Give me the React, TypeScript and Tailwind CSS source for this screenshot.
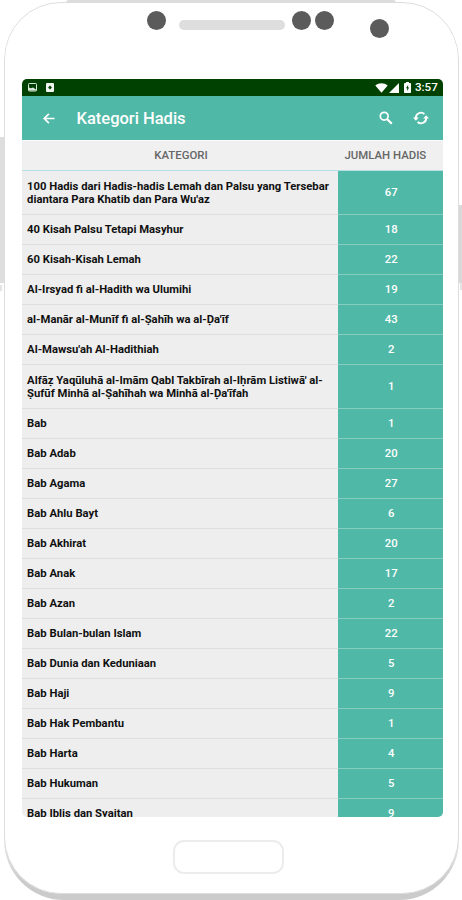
import { ReactNode } from "react";
import clsx from "clsx";

interface Category {
  lines: string[];
  total: number;
}

const categories: Category[] = [
  {
    lines: [
      "100 Hadis dari Hadis-hadis Lemah dan Palsu yang Tersebar",
      "diantara Para Khatib dan Para Wu'az",
    ],
    total: 67,
  },
  { lines: ["40 Kisah Palsu Tetapi Masyhur"], total: 18 },
  { lines: ["60 Kisah-Kisah Lemah"], total: 22 },
  { lines: ["Al-Irsyad fi al-Hadith wa Ulumihi"], total: 19 },
  { lines: ["al-Manār al-Munīf fi al-Ṣahīh wa al-Ḍa'īf"], total: 43 },
  { lines: ["Al-Mawsu'ah Al-Hadithiah"], total: 2 },
  {
    lines: [
      "Alfāẓ Yaqūluhā al-Imām Qabl Takbīrah al-Iḥrām Listiwā' al-",
      "Ṣufūf Minhā al-Ṣahīhah wa Minhā al-Ḍa'īfah",
    ],
    total: 1,
  },
  { lines: ["Bab"], total: 1 },
  { lines: ["Bab Adab"], total: 20 },
  { lines: ["Bab Agama"], total: 27 },
  { lines: ["Bab Ahlu Bayt"], total: 6 },
  { lines: ["Bab Akhirat"], total: 20 },
  { lines: ["Bab Anak"], total: 17 },
  { lines: ["Bab Azan"], total: 2 },
  { lines: ["Bab Bulan-bulan Islam"], total: 22 },
  { lines: ["Bab Dunia dan Keduniaan"], total: 5 },
  { lines: ["Bab Haji"], total: 9 },
  { lines: ["Bab Hak Pembantu"], total: 1 },
  { lines: ["Bab Harta"], total: 4 },
  { lines: ["Bab Hukuman"], total: 5 },
  { lines: ["Bab Iblis dan Syaitan"], total: 9 },
];

function StatusBar() {
  return (
    <div className="flex h-[17px] shrink-0 items-center bg-[#004000] pl-[6px] pr-[5px] text-white">
      <svg className="h-[9px] w-[9px]" viewBox="0 0 9 9" fill="none">
        <rect x="0.5" y="0.5" width="8" height="7.5" rx="0.8" stroke="#d9e6d9" />
        <path d="M1 7.5V4.5L3 5.2L5 4.5L8 6.5V7.5Z" fill="#d9e6d9" />
      </svg>
      <svg className="ml-[9px] h-[9px] w-[8px]" viewBox="0 0 8 9">
        <rect width="8" height="9" rx="1" fill="#f0f5f0" />
        <path d="M4 2.6L5.9 4.5L4 6.4L2.1 4.5Z" fill="#004000" />
      </svg>
      <svg className="ml-auto h-[10px] w-[13px]" viewBox="0 0 13 10">
        <path d="M0.3 2.4C4 -0.6 9 -0.6 12.7 2.4L6.5 9.8Z" fill="currentColor" />
      </svg>
      <svg className="ml-[1px] h-[10px] w-[10px]" viewBox="0 0 10 10">
        <path d="M10 0V10H0Z" fill="currentColor" />
      </svg>
      <svg className="ml-[5px] h-[11px] w-[7px]" viewBox="0 0 7 11">
        <path
          d="M2 0H5V1H6.2Q7 1 7 1.8V10.2Q7 11 6.2 11H0.8Q0 11 0 10.2V1.8Q0 1 0.8 1H2Z"
          fill="currentColor"
        />
        <path d="M4.1 2.9L2 6.3H3.2V9L5.1 5.5H4.1Z" fill="#004000" />
      </svg>
      <span className="ml-[4px] w-[23px] whitespace-nowrap text-[11.6px] leading-[17px] font-medium">
        3:57
      </span>
    </div>
  );
}

function AppBar() {
  return (
    <div className="flex h-[44px] shrink-0 items-center bg-[#50b8a6] pl-[21px] pr-[14px] text-white">
      <svg className="h-[11px] w-[12px]" viewBox="0 0 12 11" fill="none">
        <path
          d="M11.5 5.5H1.2M5.9 0.8L1.2 5.5L5.9 10.2"
          stroke="currentColor"
          strokeWidth="1.7"
        />
      </svg>
      <h1 className="ml-[22px] whitespace-nowrap pt-[1px] text-[16.5px] leading-[44px] font-medium">
        Kategori Hadis
      </h1>
      <svg className="ml-auto h-[14px] w-[14px]" viewBox="0 0 14 14" fill="none">
        <circle cx="5.2" cy="5.2" r="3.9" stroke="currentColor" strokeWidth="1.7" />
        <path d="M8 8L12.8 12.8" stroke="currentColor" strokeWidth="2.2" />
      </svg>
      <svg className="ml-[20px] h-[14px] w-[16px]" viewBox="0 0 16 14" fill="none">
        <path
          d="M2.8 7.2A5.2 5.2 0 0 1 11.4 3M13.2 6.8A5.2 5.2 0 0 1 4.6 11"
          stroke="currentColor"
          strokeWidth="1.9"
        />
        <path d="M0 6.4H5.8L2.9 9.8ZM16 7.6H10.2L13.1 4.2Z" fill="currentColor" />
      </svg>
    </div>
  );
}

function CategoryRow({ lines, total }: Category) {
  return (
    <div className={clsx("flex shrink-0", lines.length > 1 ? "h-[43.75px]" : "h-[30px]")}>
      <div className="flex w-[316px] flex-col justify-center border-b border-[#dedede] bg-[#eeeeee] pt-[1px] pl-[5.6px]">
        {lines.map((line) => (
          <span
            key={line}
            className="whitespace-nowrap text-[11.28px] leading-[13px] font-bold text-[#111111]"
          >
            {line}
          </span>
        ))}
      </div>
      <div className="flex flex-1 items-center justify-center border-b border-[#86cdc0] bg-[#50b8a6] pt-[2px] pl-[2px] text-[11.3px] font-medium text-white">
        {total}
      </div>
    </div>
  );
}

function Screen({ children }: { children: ReactNode }) {
  return (
    <div className="ml-[17px] mt-[76px] flex h-[738px] w-[421.4px] flex-col overflow-hidden rounded-[5px]">
      {children}
    </div>
  );
}

export default function App() {
  return (
    <div
      className="relative h-[900px] w-[462px] overflow-hidden bg-white"
      style={{ fontFamily: 'Roboto, "Noto Sans", sans-serif' }}
    >
      {/* side buttons */}
      <div className="absolute top-[137px] left-0 h-[146px] w-[5px] bg-[#dedede]" />
      <div className="absolute top-[285px] left-0 h-[6px] w-[2px] bg-[#e4e4e4]" />
      <div className="absolute top-[205px] left-[459px] h-[78px] w-[3px] bg-[#d8d8d8]" />
      <div className="absolute top-[283px] left-[460px] h-[7px] w-[2px] bg-[#e4e4e4]" />
      {/* top edge */}
      <div className="absolute top-0 left-[66px] h-[3px] w-[330px] rounded-t-full bg-[#dcdcdc]" />

      <div className="mx-auto h-[900px] w-[455px] overflow-hidden rounded-[60px] bg-linear-to-b from-white from-90% to-[#cbcbcb] to-98% pt-[2px]">
        <div className="relative h-[892px] rounded-[57px] border border-[#dddddd] bg-white">
          {/* sensors and speaker */}
          <div className="absolute top-[8px] left-[142px] size-[19px] rounded-full bg-[#5b5b5b]" />
          <div className="absolute top-[17px] left-[174px] h-[10px] w-[106px] rounded-full bg-[#dedede]" />
          <div className="absolute top-[8px] left-[287.5px] size-[19px] rounded-full bg-[#5b5b5b]" />
          <div className="absolute top-[8px] left-[310px] size-[19px] rounded-full bg-[#5b5b5b]" />
          <div className="absolute top-[16px] left-[365.5px] size-[19px] rounded-full bg-[#5b5b5b]" />

          <Screen>
            <StatusBar />
            <AppBar />
            <div className="flex h-[31px] shrink-0 items-center border-t border-b border-t-[#f8fbfa] border-b-[#b5dfe2] bg-[#f0f0f0] text-[11.4px] font-medium text-[#666666]">
              <span className="w-[316px] pl-[3px] text-center">KATEGORI</span>
              <span className="whitespace-nowrap pl-[7px]">JUMLAH HADIS</span>
            </div>
            {categories.map((category) => (
              <CategoryRow key={category.lines[0]} {...category} />
            ))}
          </Screen>

          {/* home button */}
          <div className="ml-[168px] mt-[23px] h-[34px] w-[111px] rounded-[11px] border-2 border-[#ececec]" />
        </div>
      </div>
    </div>
  );
}
